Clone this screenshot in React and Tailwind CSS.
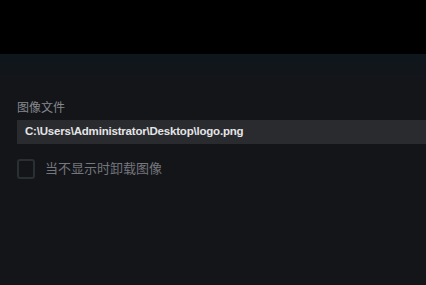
export default function App() {
  return (
    <div className="w-[426px] h-[285px] overflow-hidden bg-[#141519] flex flex-col" style={{ fontFamily: '"Liberation Sans", "Noto Sans CJK SC", sans-serif' }}>
      {/* top black area */}
      <div className="h-[54px] bg-black shrink-0" />
      {/* header fade */}
      <div className="h-[28px] shrink-0 bg-gradient-to-b from-[#0e171c] to-[#141519]" />

      <div className="pl-[17px] pt-[18px] flex flex-col">
        <label className="text-[12px] leading-[16px] text-[#85888e]">图像文件</label>
        <div className="mt-[4px] h-[24px] bg-[#2a2b2f] flex items-center pl-[8px]">
          <span className="text-[11.5px] font-bold text-[#e4e5e7] tracking-[-0.2px]">
            C:\Users\Administrator\Desktop\logo.png
          </span>
        </div>
        <div className="mt-[15px] flex items-center gap-[10px]">
          <div className="w-[18px] h-[20px] rounded-[3px] border-2 border-[#2a2f33]" />
          <span className="text-[13px] text-[#74777d]">当不显示时卸载图像</span>
        </div>
      </div>
    </div>
  );
}
